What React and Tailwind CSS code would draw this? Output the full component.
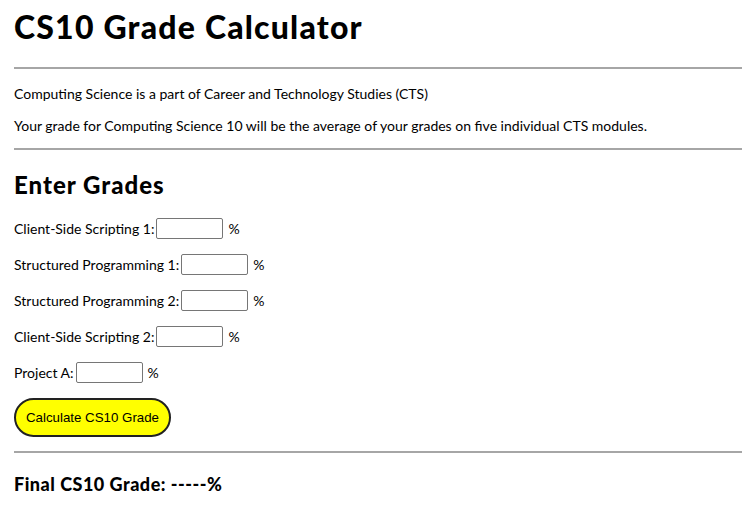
import React, { useState } from 'react';

const modules = [
    'Client-Side Scripting 1',
    'Structured Programming 1',
    'Structured Programming 2',
    'Client-Side Scripting 2',
    'Project A',
];

const App = () => {
    const [grades, setGrades] = useState(modules.map(() => ''));
    const [result, setResult] = useState('-----');

    const calculate = () => {
        const nums = grades.map((g) => parseFloat(g));
        if (nums.some((n) => isNaN(n))) {
            setResult('-----');
            return;
        }
        const avg = nums.reduce((a, b) => a + b, 0) / nums.length;
        setResult(avg.toFixed(1));
    };

    return (
        <div className="min-h-screen bg-white text-black pl-[14px] pr-[1px] font-['Lato','Open_Sans',sans-serif]">
            <h1 className="pt-[7px] text-[32px] leading-[40px] font-black tracking-[1.2px]">CS10 Grade Calculator</h1>
            <hr className="mt-[20px] border-0 border-t-2 border-[#a6a6a6]" />

            <p className="mt-[15px] text-[14px] leading-[20px]">Computing Science is a part of Career and Technology Studies (CTS)</p>
            <p className="mt-[12px] text-[14px] leading-[20px]">Your grade for Computing Science 10 will be the average of your grades on five individual CTS modules.</p>
            <hr className="mt-[12px] border-0 border-t-2 border-[#a6a6a6]" />

            <h2 className="mt-[20px] text-[24px] leading-[30px] font-black tracking-[1px]">Enter Grades</h2>

            <div className="mt-[10px] flex flex-col">
                {modules.map((name, i) => (
                    <div key={name} className="h-[36px] flex items-center text-[14px]">
                        <span>{name}:</span>
                        <input
                            type="text"
                            value={grades[i]}
                            onChange={(e) => {
                                const next = [...grades];
                                next[i] = e.target.value;
                                setGrades(next);
                            }}
                            className="ml-[2px] w-[67px] h-[21px] border border-[#767676] rounded-[2px] px-1 text-[13px] outline-none"
                        />
                        <span className="ml-[5px]">%</span>
                    </div>
                ))}
            </div>

            <button
                onClick={calculate}
                className="mt-[8px] h-[39px] w-[157px] rounded-full bg-[#ffff00] border-2 border-[#222] text-[13.3px] font-['Liberation_Sans',Arial,sans-serif] text-black"
            >
                Calculate CS10 Grade
            </button>

            <hr className="mt-[14px] border-0 border-t-2 border-[#a6a6a6]" />

            <h3 className="mt-[19px] text-[18px] leading-[24px] font-black tracking-[0.5px]">
                Final CS10 Grade: <span>{result}%</span>
            </h3>
        </div>
    );
};

export default App;
